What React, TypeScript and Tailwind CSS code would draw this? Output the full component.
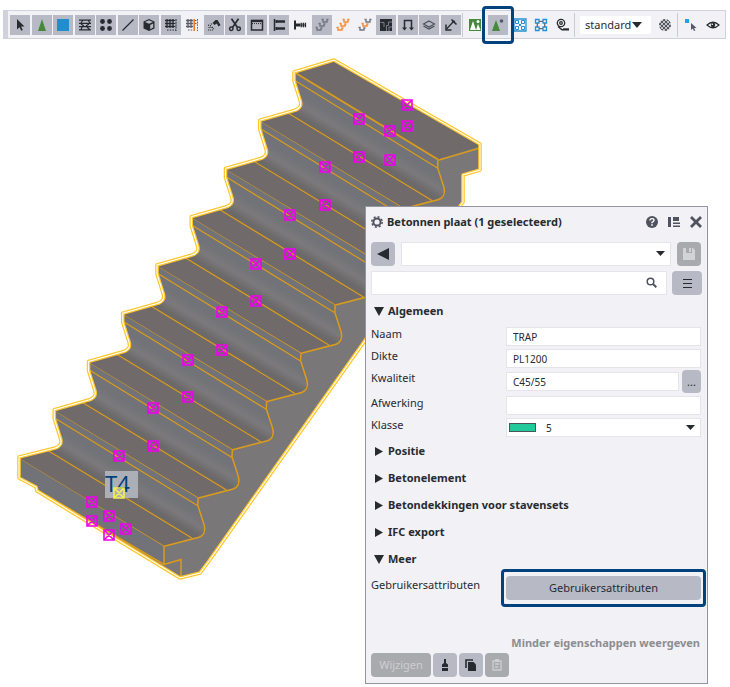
import React from "react";

const DARK = "#272b30";

type Tool = { name: string; active: boolean; icon: React.ReactNode };

const Icon = ({ children, size = 14 }: { children: React.ReactNode; size?: number }) => (
  <svg width={size} height={size} viewBox="0 0 14 14" fill="none" stroke={DARK} strokeWidth="1.3" aria-hidden="true">
    {children}
  </svg>
);

const reinforcement = (a: string, b: string, c: string) => (
  <Icon>
    <path d="M6.500 1.500H8v2.500h4V1.500h1.500" stroke={a} strokeWidth="1.400" />
    <path d="M3.500 5.500H5V8h4V6h1.500" stroke={b} strokeWidth="1.400" />
    <path d="M.5 9.500H2V12h4v-2h1.500" stroke={c} strokeWidth="1.400" />
  </Icon>
);

const GREY = "#73757f";
const ORANGE = "#f58a33";

const tools: Tool[] = [
  { name: "Selecteren", active: true, icon: <Icon><path d="M4 1v10.500l2.600-2.300 1.700 3.600 1.500-.7-1.700-3.500h3.400z" fill={DARK} stroke="none" /></Icon> },
  { name: "Componenten", active: true, icon: <Icon><path d="M7 1l4 12H3z" fill="#47893c" stroke="none" /></Icon> },
  { name: "Onderdelen", active: true, icon: <Icon><path d="M1 1h12v12H1z" fill="#238ccb" stroke="none" /></Icon> },
  { name: "Oppervlakken", active: true, icon: <Icon><path d="M1 2.200h12M1 5.400h12M1 8.600h12M1 11.800h12M5 2l-2 3M10 2l2 3M3 6l3 2M11 6L8 8M4 9l-1 3M9 9l3 3" strokeWidth="1.200" /></Icon> },
  { name: "Punten", active: true, icon: <Icon><g fill={DARK} stroke="none"><circle cx="3.500" cy="3.500" r="2.400" /><circle cx="10.500" cy="3.500" r="2.400" /><circle cx="3.500" cy="10.500" r="2.400" /><circle cx="10.500" cy="10.500" r="2.400" /></g></Icon> },
  { name: "Lijnen", active: true, icon: <Icon><path d="M1.500 12.500l11-11" /></Icon> },
  { name: "Referentiemodellen", active: true, icon: <Icon><path d="M7 1l5.500 2.500v7L7 13l-5.500-2.500v-7z" fill={DARK} stroke="none" /><path d="M3 4l4 1.800L11 4 7 2.300z" fill="#b7bac4" stroke="none" /><path d="M8.200 7l3-1.400v4L8.200 11.200z" fill="#b7bac4" stroke="none" /></Icon> },
  { name: "Stramienen", active: true, icon: <Icon><path d="M3 1v9M6 1v9M9 1v9M1 2.500h9M1 5.500h9M1 8.500h9" /><path d="M12 1v12M3 12h9M10 2.500h3M10 5.500h3M10 8.500h3" strokeDasharray="1.500 1.200" strokeWidth="1" /></Icon> },
  { name: "Stramienlijn", active: false, icon: <Icon><path d="M3 1v9M6 1v9M1 2.500h7M1 5.500h7M1 8.500h7" stroke="#5b5d68" /><path d="M12.500 1v12M3 12h5M10 2.500h3M10 5.500h3" strokeDasharray="1.500 1.200" strokeWidth="1" stroke="#5b5d68" /><path d="M9.200 1v12" stroke="#f47b20" strokeWidth="1.600" /></Icon> },
  { name: "Lassen", active: true, icon: <Icon><path d="M5.500 5l3-3h2l3 5-2 1.500-1.700-3L7.500 7z" fill={DARK} stroke="none" /><path d="M1 7l3 1M4 5.500l1 1.500M1 12h5M1.500 9.500h3M5 9l2 2" strokeDasharray="1.200 .8" strokeWidth="1.100" /></Icon> },
  { name: "Doorsnijdingen", active: true, icon: <Icon><path d="M3.500.8l5.800 8.400M10.500.8L4.700 9.200" strokeWidth="1.700" /><circle cx="3.300" cy="10.800" r="1.700" strokeWidth="1.500" /><circle cx="10.700" cy="10.800" r="1.700" strokeWidth="1.500" /></Icon> },
  { name: "Vensters", active: true, icon: <Icon><rect x="1.500" y="2.500" width="11" height="9.500" strokeWidth="1.500" /><path d="M1 3h12" strokeWidth="2.200" /><path d="M2 5.600h10" strokeDasharray="1 1" strokeWidth="1" /></Icon> },
  { name: "Bouten", active: true, icon: <Icon><path d="M2.500 1v12" strokeWidth="1.500" /><path d="M3.500 3.500H13M3.500 10.500H13" strokeWidth="2.400" /><path d="M4.500 2v3M4.500 9v3" /></Icon> },
  { name: "Enkele bout", active: false, icon: <Icon><path d="M2 2.500v9" strokeWidth="2" /><path d="M3 7h4" strokeWidth="3" /><path d="M8.200 4.700v4.600M10.300 4.700v4.600M12.400 4.700v4.600" strokeWidth="1.400" /><path d="M7 7h6" strokeWidth=".8" /></Icon> },
  { name: "Wapening", active: true, icon: reinforcement(GREY, GREY, GREY) },
  { name: "Wapeningsset", active: false, icon: reinforcement(ORANGE, ORANGE, ORANGE) },
  { name: "Wapeningsgroep", active: false, icon: reinforcement(GREY, ORANGE, GREY) },
  { name: "Vlakken", active: true, icon: <Icon><path d="M1 1h12v12H1z" fill={DARK} stroke="none" /><path d="M1.500 4.500h3.500V9M7.500 13V7.500h2V4H13M10 13V9h3" stroke="#8f929c" strokeWidth=".8" /></Icon> },
  { name: "Beugels", active: true, icon: <Icon><path d="M3.500 11V2.500h7V11" strokeWidth="1.500" /><path d="M1 9.500h5l-2.500 3zM8 9.500h5l-2.500 3z" fill={DARK} stroke="none" /></Icon> },
  { name: "Lagen", active: true, icon: <Icon><path d="M7 3l5.500 3L7 9 1.500 6z" stroke="#4b4e58" strokeWidth="1.100" /><path d="M1.500 8L7 11l5.500-3" stroke="#4b4e58" strokeWidth="1.300" /></Icon> },
  { name: "Afstanden", active: true, icon: <Icon><path d="M2.500 11l7-7.500" strokeWidth="1.300" /><path d="M2 6.500V12h5.500M7.500 1.500l5 5" strokeWidth="1.500" /><circle cx="9.800" cy="3.700" r="1.300" fill={DARK} stroke="none" /></Icon> },
];

const STEP_X = 34.25;
const STEP_Y = 48.25;
const steps = [0, 1, 2, 3, 4, 5, 6, 7, 8];

const silhouette = (() => {
  let d = "M334 60L294 72";
  for (let i = 8; i >= 1; i--) {
    const x = 20 + STEP_X * i;
    const y = 458 - STEP_Y * i;
    d += `L${x} ${y}v9l6 19q3 8-6 10.500`;
  }
  return d + "L19 457v21l17 9 1 4 143 87 20-5 9-12 254-359v-27l17-5v-26z";
})();

const markers = [
  [407, 105], [407, 126], [359, 119], [390, 131], [359, 157], [390, 160], [325, 167], [325, 205],
  [290, 215], [290, 254], [256, 264], [256, 301], [222, 312], [222, 350], [188, 360], [188, 397],
  [153, 408], [153, 446], [119, 456], [92, 502], [92, 521], [109, 516], [109, 535], [126, 529],
];

const Marker = ({ x, y, color }: { x: number; y: number; color: string }) => (
  <path
    d={`M${x - 5} ${y - 5}h10v10h-10zM${x - 4} ${y - 4}l8 8M${x + 4} ${y - 4}l-8 8`}
    fill="none"
    stroke={color}
    strokeWidth="1.600"
  />
);

function Staircase() {
  return (
    <svg width="500" height="600" viewBox="0 40 500 600" className="col-start-1 row-start-1" role="img" aria-label="Trap T4">
      <defs>
        <linearGradient id="riser" gradientUnits="userSpaceOnUse" x1="20" y1="18" x2="5" y2="43">
          <stop offset="0" stopColor="#727378" />
          <stop offset=".35" stopColor="#727378" />
          <stop offset=".7" stopColor="#7b797b" />
          <stop offset="1" stopColor="#6c696a" />
        </linearGradient>
        <clipPath id="body"><path d={silhouette} /></clipPath>
      </defs>
      <g clipPath="url(#body)">
        <path d={silhouette} fill="#7a7778" />
        {steps.map((i) => (
          <g key={i} transform={`translate(${20 + STEP_X * i} ${458 - STEP_Y * i})`} stroke="#dc9b18">
            <path d="M0 0L40-14 186 74 144 87.500z" fill="#706b6a" stroke="none" />
            {i > 0 ? (
              <>
                <path d="M-6 41l-28 8 144 87 27-8z" fill="#706b6a" stroke="none" />
                <path d="M0 0v9l6 21-6 9-6 2 144 87.500q11-2 12-11l-7-22V87.500z" fill="url(#riser)" stroke="none" />
                <path d="M0 0l144 87.500" strokeWidth="1.800" fill="none" />
                <path d="M0 8l143.500 88M-6 41l144 87.500" strokeWidth="1.200" fill="none" />
                <path d="M144 87.500l-.5 8 6.500 20q2 9-5 12l-35 9" strokeWidth="1.500" fill="none" />
              </>
            ) : (
              <>
                <path d="M0 0v21l144 86V87.500z" fill="#727378" stroke="none" />
                <path d="M0 0l144 87.500v19l17-5v22M144 106.500L14 30" strokeWidth="1.500" fill="none" />
              </>
            )}
          </g>
        ))}
        <path d="M439 160l41-12" stroke="#dc9b18" strokeWidth="1.400" />
      </g>
      <path d={silhouette} fill="none" stroke="#ffc62c" strokeWidth="3.600" strokeLinejoin="round" />
      <path d={silhouette} fill="none" stroke="#ffffff" strokeWidth="1.100" />
      <path d="M105 471h33v27h-33z" fill="#adafb7" />
      <text x="105" y="492" fontSize="22" fill="#00417f" fontFamily="'Noto Sans', sans-serif">T4</text>
      {markers.map(([x, y]) => (
        <Marker key={`${x}-${y}`} x={x} y={y} color="#f000f0" />
      ))}
      <Marker x={119} y={493} color="#f3f04b" />
    </svg>
  );
}

function Toolbar() {
  return (
    <header className="mt-[10px] mr-1 ml-[3px] flex h-[29px] items-center border border-l-[5px] border-[#cfd1db] bg-[#f2f1f6]">
      <div className="ml-[2px] flex w-[451px] shrink-0 justify-between">
        {tools.map((t) => (
          <button
            key={t.name}
            aria-label={t.name}
            className={
              t.active
                ? "flex size-5 items-center justify-center bg-[#b7bac4]"
                : "flex size-5 items-center justify-center"
            }
          >
            {t.icon}
          </button>
        ))}
      </div>
      <div className="mx-px h-6 w-px bg-[#c8cad4]" />
      <div className="flex w-[109px] shrink-0 items-center justify-between">
        <button aria-label="Componentobjecten" className="flex h-5 w-[22px] items-center justify-center">
          <Icon><path d="M1 1h12v12H1z" fill="#47893c" stroke="none" /><path d="M5 3l3 9H2z" fill="#fff" stroke="none" /><path d="M10 6l2.500 6H8z" fill="#fff" stroke="none" /><circle cx="10" cy="3.500" r="1.500" fill="#fff" stroke="none" /></Icon>
        </button>
        <div className="relative">
          <button aria-label="Merkobjecten" className="flex size-5 items-center justify-center bg-[#b7bac4]">
            <Icon><path d="M5 2l4 11H1z" fill="#47893c" stroke="none" /><circle cx="10.500" cy="3" r="1.800" fill="#555868" stroke="none" /></Icon>
          </button>
          <div className="pointer-events-none absolute -inset-x-[6px] -inset-y-[9px] rounded-sm border-3 border-[#00427d]" />
        </div>
        <button aria-label="Merken selecteren" className="flex size-5 items-center justify-center">
          <Icon><path d="M1 1h12v12H1z" stroke="#2591d0" /><path d="M2.500 2.500h3v3h-3zM8.500 2.500h3v3h-3zM2.500 8.500h3v3h-3zM8.500 8.500h3v3h-3zM5.500 5.500l3 3M8.500 5.500l-3 3" stroke="#2591d0" strokeWidth="1" /></Icon>
        </button>
        <button aria-label="Objecten in merken" className="flex size-5 items-center justify-center">
          <Icon><path d="M1.500 1.500h3.500v3.500H1.500zM9 1.500h3.500v3.500H9zM1.500 9h3.500v3.500H1.500zM9 9h3.500v3.500H9z" stroke="#2591d0" /><path d="M5 3.300h4M5 10.700h4M3.300 5v4M10.700 5v4" stroke="#696b75" /></Icon>
        </button>
        <button aria-label="Taken" className="flex size-5 items-center justify-center">
          <Icon><circle cx="5" cy="5" r="3.700" /><circle cx="5" cy="5" r="1.300" /><path d="M2 8.500l4 3.300h7" strokeWidth="1.500" /><path d="M7 10.800h6" strokeWidth="1" /></Icon>
        </button>
      </div>
      <div className="ml-px h-6 w-px bg-[#c8cad4]" />
      <div className="relative ml-[5px]">
        <select aria-label="Selectiefilter" className="block h-[18px] w-[71px] appearance-none bg-white pl-[5px] text-[11px] leading-[18px] text-[#272b30]">
          <option>standard</option>
        </select>
        <svg className="pointer-events-none absolute top-[6px] right-[9px]" width="10" height="6" aria-hidden="true"><path d="M0 0h10L5 6z" fill={DARK} /></svg>
      </div>
      <button aria-label="Filter" className="ml-1 flex size-5 items-center justify-center">
        <svg width="12" height="12" viewBox="0 0 12 12" aria-hidden="true">
          <defs><pattern id="check" width="4" height="4" patternUnits="userSpaceOnUse"><path d="M0 0h2v2h2v2H2V2H0z" fill="#55575f" /></pattern></defs>
          <circle cx="6" cy="6" r="6" fill="#c4c5cb" /><circle cx="6" cy="6" r="6" fill="url(#check)" />
        </svg>
      </button>
      <div className="ml-[2px] h-6 w-px bg-[#c8cad4]" />
      <button aria-label="Slim selecteren" className="ml-[3px] flex size-5 items-center justify-center">
        <Icon><path d="M1 1h4v4H1z" fill="#22a3e6" stroke="none" /><path d="M7 5v7l1.800-1.600 1.200 2.700 1.300-.6-1.200-2.600h2.500z" fill="#555868" stroke="none" /></Icon>
      </button>
      <button aria-label="Zichtbaarheid" className="ml-[2px] flex size-5 items-center justify-center">
        <Icon><path d="M1 7q6-5.500 12 0-6 5.500-12 0z" fill="#fff" strokeWidth="1.200" /><circle cx="7" cy="7" r="2.300" fill={DARK} stroke="none" /><circle cx="6.300" cy="6.300" r=".8" fill="#fff" stroke="none" /></Icon>
      </button>
    </header>
  );
}

const Arrow = ({ open }: { open: boolean }) =>
  open ? (
    <svg width="10" height="9" aria-hidden="true"><path d="M0 0h10L5 9z" fill={DARK} /></svg>
  ) : (
    <svg width="10" height="9" aria-hidden="true"><path d="M1 0l8 4.500L1 9z" fill={DARK} /></svg>
  );

const Section = ({ title, open = false }: { title: string; open?: boolean }) => (
  <button aria-expanded={open} className="flex h-[27px] items-center gap-1 pl-[3px] font-bold">
    <Arrow open={open} />
    {title}
  </button>
);

const DropArrow = () => (
  <svg className="pointer-events-none absolute top-1/2 right-[6px] -translate-y-1/2" width="9" height="6" aria-hidden="true">
    <path d="M0 0h9L4.500 5z" fill={DARK} />
  </svg>
);

const fieldClass = "block h-[19px] w-full min-w-0 border border-[#e4e4ea] bg-white pl-[6px] text-[10px]";
const labelClass = "w-[135px] shrink-0 leading-[18px]";

const Field = ({ id, label, value }: { id: string; label: string; value: string }) => (
  <div className="flex h-[22px]">
    <label htmlFor={id} className={labelClass}>{label}</label>
    <div className="flex-1 pt-[2px]">
      <input id={id} defaultValue={value} className={fieldClass} />
    </div>
  </div>
);

function PropertyPanel() {
  return (
    <aside className="col-start-1 row-start-1 mt-[166px] mr-[22px] flex w-[343px] flex-col self-start justify-self-end border border-[#9395a1] bg-[#f2f1f6] px-[5px] pb-[6px] text-[11px] text-[#272b30]">
      <div className="flex h-[30px] items-center">
        <svg width="12" height="12" viewBox="0 0 12 12" aria-hidden="true">
          <circle cx="6" cy="6" r="3.600" fill="none" stroke="#50535f" strokeWidth="2" />
          <circle cx="6" cy="6" r="5.200" fill="none" stroke="#50535f" strokeWidth="1.500" strokeDasharray="2 2.084" />
        </svg>
        <h1 className="ml-1 flex-1 font-bold">Betonnen plaat (1 geselecteerd)</h1>
        <button aria-label="Help" className="mr-[10px]">
          <svg width="12" height="12" viewBox="0 0 12 12" aria-hidden="true"><circle cx="6" cy="6" r="6" fill="#50535f" /><path d="M4 4.500Q4 2.600 6 2.600t2 1.700Q8 5.400 6 6.300V7.200" stroke="#fff" strokeWidth="1.400" fill="none" /><path d="M5.200 8.200h1.600v1.500H5.200z" fill="#fff" /></svg>
        </button>
        <button aria-label="Indeling" className="mr-[10px]">
          <svg width="12" height="10" viewBox="0 0 12 10" aria-hidden="true"><path d="M0 0h3v10H0zM5 0h6v4H5zM5 5.500h7v1.500H5zM5 8.500h7V10H5z" fill="#50535f" /></svg>
        </button>
        <button aria-label="Sluiten">
          <svg width="12" height="12" viewBox="0 0 12 12" aria-hidden="true"><path d="M1 1l10 10M11 1L1 11" stroke="#50535f" strokeWidth="2.800" /></svg>
        </button>
      </div>

      <div className="mt-[5px] flex gap-[6px]">
        <button aria-label="Terug" className="flex size-6 items-center justify-center rounded-sm bg-[#b7bac4]">
          <svg width="12" height="12" aria-hidden="true"><path d="M12 0v12L0 6z" fill={DARK} /></svg>
        </button>
        <div className="relative flex-1">
          <select aria-label="Eigenschappenset" className="block h-6 w-full appearance-none border border-[#e4e4ea] bg-white">
            <option></option>
          </select>
          <DropArrow />
        </div>
        <button aria-label="Opslaan" className="mr-px flex size-6 items-center justify-center rounded-sm bg-[#a9aaae]">
          <svg width="12" height="12" viewBox="0 0 12 12" aria-hidden="true"><path d="M0 0h3v5h6V0h1l2 2v10H0zM6 0h2v4H6z" fill="#d2d3d6" /></svg>
        </button>
      </div>

      <div className="mt-[5px] flex gap-[5px]">
        <div className="relative flex-1">
          <input type="search" aria-label="Zoeken" className="block h-6 w-full border border-[#e4e4ea] bg-white px-1" />
          <svg className="pointer-events-none absolute top-[6px] right-[10px]" width="11" height="11" viewBox="0 0 11 11" aria-hidden="true"><circle cx="4.500" cy="4.500" r="3.300" fill="none" stroke="#50535f" strokeWidth="1.500" /><path d="M7 7l3.300 3.300" stroke="#50535f" strokeWidth="2" /></svg>
        </div>
        <button aria-label="Menu" className="flex h-6 w-[30px] items-center justify-center rounded-sm bg-[#b7bac4]">
          <svg width="9" height="9" aria-hidden="true"><path d="M0 .5h9M0 4.500h9M0 8.500h9" stroke={DARK} strokeWidth="1" /></svg>
        </button>
      </div>

      <div className="mt-[3px] flex flex-col"><Section title="Algemeen" open /></div>

      <div className="pr-px">
        <Field id="naam" label="Naam" value="TRAP" />
        <Field id="dikte" label="Dikte" value="PL1200" />
        <div className="flex h-[25px]">
          <label htmlFor="kwaliteit" className={labelClass}>Kwaliteit</label>
          <div className="flex flex-1 items-center gap-[3px]">
            <input id="kwaliteit" defaultValue="C45/55" className={fieldClass} />
            <button aria-label="Kwaliteit kiezen" className="h-[23px] w-[19px] shrink-0 rounded-sm bg-[#b7bac4] leading-4">...</button>
          </div>
        </div>
        <Field id="afwerking" label="Afwerking" value="" />
        <div className="flex h-[22px]">
          <label htmlFor="klasse" className={labelClass}>Klasse</label>
          <div className="flex-1 pt-[2px]">
            <div className="relative">
              <select id="klasse" className="block h-[19px] w-full appearance-none border border-[#e4e4ea] bg-white pl-[39px] text-[10px] leading-4">
                <option>5</option>
              </select>
              <div className="pointer-events-none absolute top-[5px] left-[3px] h-[9px] w-[27px] border border-[#4d5358] bg-[#22c99b]" />
              <DropArrow />
            </div>
          </div>
        </div>
      </div>

      <div className="flex flex-col">
        <Section title="Positie" />
        <Section title="Betonelement" />
        <Section title="Betondekkingen voor stavensets" />
        <Section title="IFC export" />
        <Section title="Meer" open />
      </div>

      <div className="mt-[3px] flex">
        <label htmlFor="attributen" className={labelClass}>Gebruikersattributen</label>
        <div className="relative mr-px flex-1">
          <button id="attributen" className="block h-6 w-full rounded-sm bg-[#b7bac4]">Gebruikersattributen</button>
          <div className="pointer-events-none absolute -inset-x-[5px] -inset-y-[7px] rounded-sm border-3 border-[#00427d]" />
        </div>
      </div>

      <button className="mt-[35px] mr-[2px] self-end leading-4 font-bold text-[#8d8d91]">Minder eigenschappen weergeven</button>

      <div className="mt-[2px] flex gap-[2px]">
        <button className="h-6 w-[60px] rounded-sm bg-[#a9aaae] text-[#cdced1]">Wijzigen</button>
        <button aria-label="Eigenschappen kopiëren" className="flex size-6 items-center justify-center rounded-sm bg-[#b7bac4]">
          <svg width="8" height="12" viewBox="0 0 8 12" aria-hidden="true"><path d="M3 0h2v4l2 1.500V8H1V5.500L3 4zM1 9h6v3H1z" fill={DARK} /></svg>
        </button>
        <button aria-label="Kopiëren" className="flex size-6 items-center justify-center rounded-sm bg-[#b7bac4]">
          <svg width="12" height="12" viewBox="0 0 12 12" aria-hidden="true"><path d="M1 9V1h7" fill="none" stroke={DARK} strokeWidth="1.600" /><path d="M3 3h5.500L11 5.500V12H3z" fill={DARK} /></svg>
        </button>
        <button aria-label="Plakken" className="flex size-6 items-center justify-center rounded-sm bg-[#a9aaae]">
          <svg width="10" height="12" viewBox="0 0 10 12" aria-hidden="true"><path d="M1 2h8v9H1zM3 5h4M3 8h3" fill="none" stroke="#cdced1" strokeWidth="1.300" /><path d="M3 0h4v3H3z" fill="#cdced1" /></svg>
        </button>
      </div>
    </aside>
  );
}

export default function App() {
  return (
    <div className="flow-root min-h-screen bg-white font-['Noto_Sans',sans-serif]">
      <Toolbar />
      <main className="mt-px grid grid-cols-1">
        <Staircase />
        <PropertyPanel />
      </main>
    </div>
  );
}
